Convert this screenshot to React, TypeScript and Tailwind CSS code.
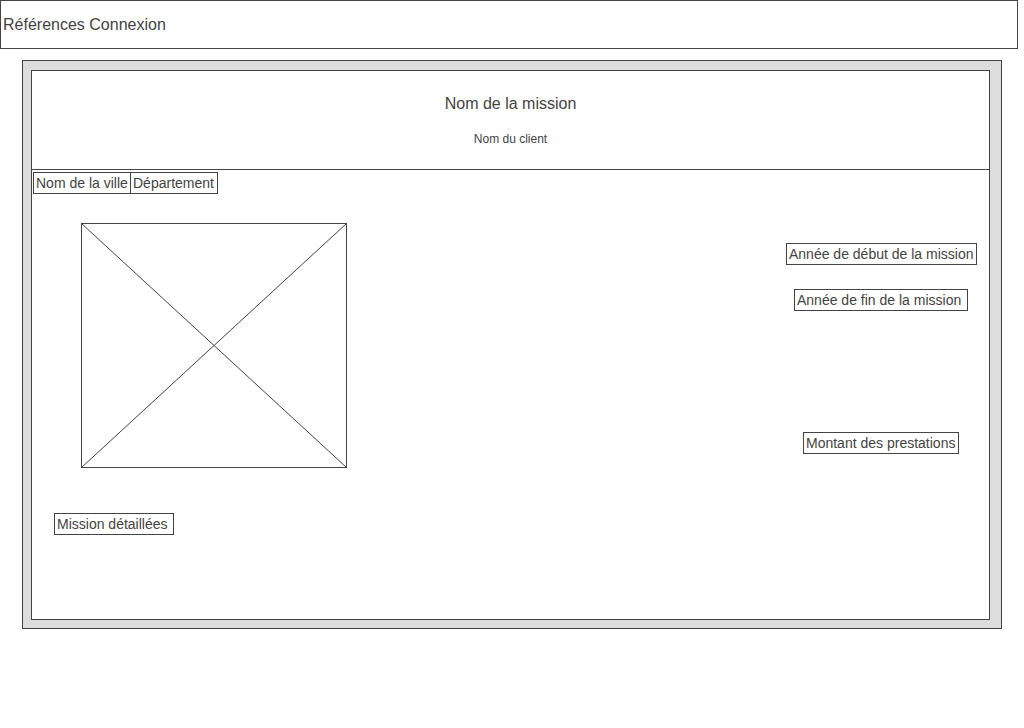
import type { ReactNode } from "react";

type TagProps = {
  className?: string;
  children: ReactNode;
};

function Tag({ className = "", children }: TagProps) {
  return (
    <div
      className={`border border-[#434343] px-0.5 text-sm leading-5 whitespace-nowrap ${className}`}
    >
      {children}
    </div>
  );
}

function ImagePlaceholder() {
  return (
    <svg
      role="img"
      aria-label="Image"
      className="ml-[49px] h-[245px] w-[266px] shrink-0"
      viewBox="0 0 266 245"
      fill="none"
      stroke="#434343"
    >
      <rect x="0.5" y="0.5" width="265" height="244" />
      <path d="M0.5 0.5 265.5 244.5M265.5 0.5 0.5 244.5" />
    </svg>
  );
}

export default function App() {
  return (
    <div className="bg-white font-['Liberation_Sans',Arial,sans-serif] text-[#434343]">
      <nav className="mr-1.5 border border-[#434343] px-0.5 pt-3 pb-[11px] text-base leading-6">
        <a href="#references">Références</a>{" "}
        <a href="#connexion">Connexion</a>
      </nav>

      <main className="mx-[22px] mt-[11px] border border-[#434343] bg-[#dddddd] pt-[9px] pr-[11px] pb-2 pl-2">
        <article className="border border-[#434343] bg-white">
          <header className="border-b border-[#434343] pt-[21px] pb-[22px] text-center">
            <h1 className="text-base leading-6">Nom de la mission</h1>
            <p className="mt-[15px] text-xs leading-4">Nom du client</p>
          </header>

          <div className="flex pt-0.5 pl-px">
            <Tag className="w-[98px]">Nom de la ville</Tag>
            <Tag className="-ml-px w-[88px]">Département</Tag>
          </div>

          <div className="mt-[29px] flex justify-between">
            <ImagePlaceholder />
            <div className="flex flex-col items-end pt-5">
              <Tag className="mr-3 w-[191px]">Année de début de la mission</Tag>
              <Tag className="mt-6 mr-[21px] w-[174px]">Année de fin de la mission</Tag>
              <Tag className="mt-[121px] mr-[30px] w-[156px]">Montant des prestations</Tag>
            </div>
          </div>

          <div className="flex pt-[45px] pb-[84px] pl-[22px]">
            <Tag className="w-[120px]">Mission détaillées</Tag>
          </div>
        </article>
      </main>
    </div>
  );
}
